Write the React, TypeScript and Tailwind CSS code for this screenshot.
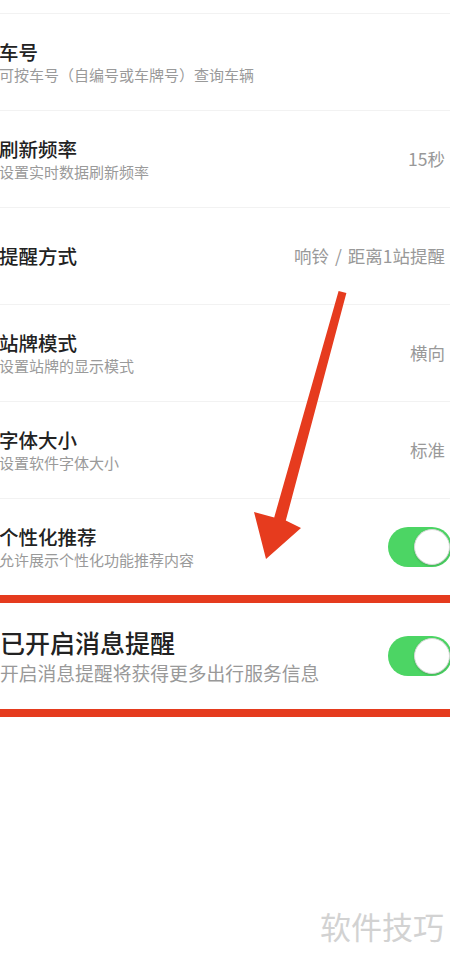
import { useState } from "react";

interface SettingRow {
  title: string;
  desc?: string;
  value?: string;
  toggle?: boolean;
}

const rows: SettingRow[] = [
  { title: "车号", desc: "可按车号（自编号或车牌号）查询车辆" },
  { title: "刷新频率", desc: "设置实时数据刷新频率", value: "15秒" },
  { title: "提醒方式", value: "响铃 / 距离1站提醒" },
  { title: "站牌模式", desc: "设置站牌的显示模式", value: "横向" },
  { title: "字体大小", desc: "设置软件字体大小", value: "标准" },
  { title: "个性化推荐", desc: "允许展示个性化功能推荐内容", toggle: true },
];

const Toggle = ({ on, onClick, className }: { on: boolean; onClick: () => void; className: string }) => (
  <button
    onClick={onClick}
    className={`relative shrink-0 w-[64px] h-[40px] rounded-full ${className} ${on ? "bg-[#4cd564]" : "bg-[#e5e5e5]"}`}
  >
    <span
      className={`absolute top-[2px] w-[36px] h-[36px] rounded-full bg-white border border-[#d8d8d8] shadow-[0_1px_2px_rgba(0,0,0,0.15)] ${on ? "left-[26px]" : "left-[2px]"}`}
    />
  </button>
);

const Value = ({ text }: { text: string }) => {
  const parts = text.split(" / ");
  return (
    <span className="text-[17.5px] text-[#999]">
      {parts[0]}
      {parts.length > 1 && (
        <>
          <span className="mx-[6px]">/</span>
          {parts[1]}
        </>
      )}
    </span>
  );
};

const App = () => {
  const [recommend, setRecommend] = useState(true);
  const [notify, setNotify] = useState(true);

  return (
    <div className="relative w-[450px] h-[964px] overflow-hidden bg-white font-['Noto_Sans_CJK_SC','Noto_Sans',sans-serif]">
      <div className="h-[13px]" />
      {rows.map((row) => (
        <div
          key={row.title}
          className="h-[97px] border-t border-[#f2f2f2] flex items-center justify-between pr-[5px]"
        >
          <div className="flex flex-col ml-[-1px]">
            <span className="text-[19.5px] leading-[24px] font-medium text-[#222]">{row.title}</span>
            {row.desc && (
              <span className="text-[15px] leading-[20px] mt-[1px] text-[#9a9a9a]">{row.desc}</span>
            )}
          </div>
          {row.value && <Value text={row.value} />}
          {row.toggle && (
            <Toggle on={recommend} onClick={() => setRecommend(!recommend)} className="mr-[-7px]" />
          )}
        </div>
      ))}

      {/* highlighted row */}
      <div className="h-[8px] bg-[#e53b1e]" />
      <div className="h-[106px] flex items-center justify-between">
        <div className="flex flex-col">
          <span className="text-[25px] leading-[30px] font-medium text-[#222]">已开启消息提醒</span>
          <span className="text-[18.8px] leading-[24px] mt-[4px] text-[#999]">开启消息提醒将获得更多出行服务信息</span>
        </div>
        <Toggle on={notify} onClick={() => setNotify(!notify)} className="mr-[-2px]" />
      </div>
      <div className="h-[8px] bg-[#e53b1e]" />

      {/* annotation arrow */}
      <svg className="absolute left-0 top-0 pointer-events-none" width="450" height="964">
        <polygon
          points="338.6,291 346.4,293 285.8,520.6 301,528 266,559 254,512 274.2,517.4"
          fill="#e63b1e"
        />
      </svg>

      <span className="absolute right-[6px] top-[903px] text-[31px] text-[#d2d2d2]">软件技巧</span>
    </div>
  );
};

export default App;
